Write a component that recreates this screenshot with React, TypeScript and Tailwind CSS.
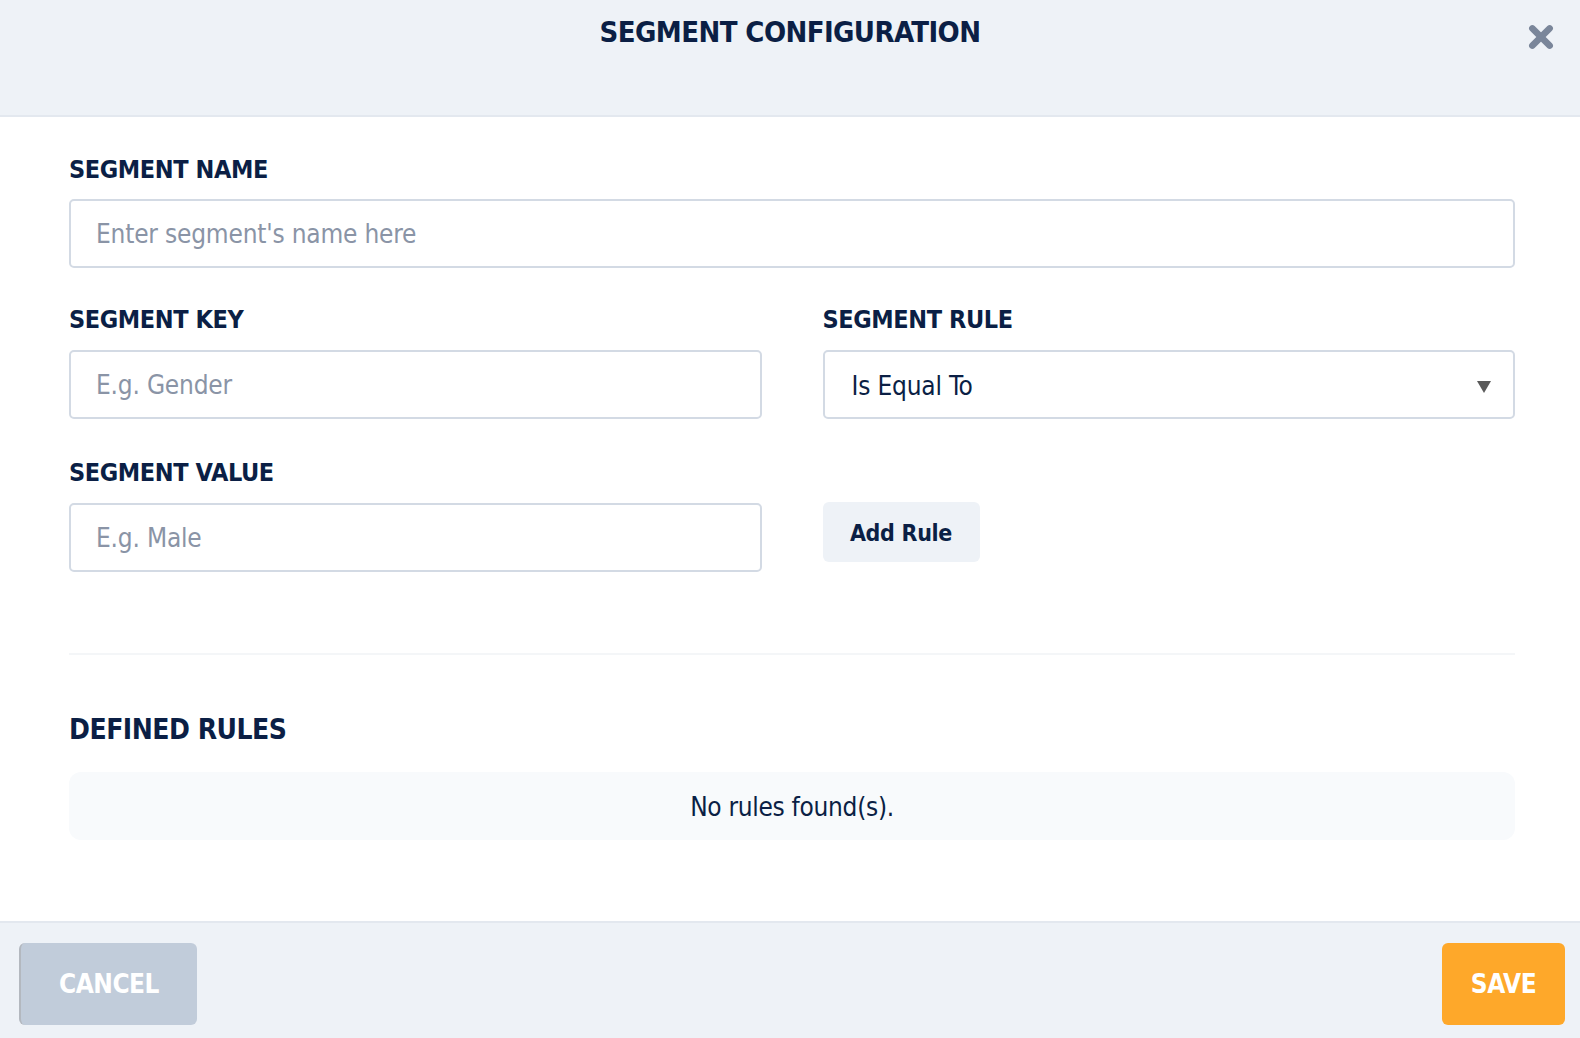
import React from "react";

const font = { fontFamily: '"DejaVu Sans Condensed", "Liberation Sans", sans-serif' };

export default function App() {
  return (
    <div className="w-[1580px] h-[1038px] flex flex-col bg-white text-[#0b1f45]" style={font}>
      <div className="h-[117px] shrink-0 bg-[#eef2f7] border-b-2 border-[#e3e8ef] flex items-start justify-center relative">
        <h1 className="mt-[11px] text-[29px] font-bold tracking-[-0.6px] text-[#0b1f45]">SEGMENT CONFIGURATION</h1>
        <button className="absolute right-[26px] top-[24px] w-[26px] h-[26px] flex items-center justify-center">
          <svg viewBox="0 0 24 24" width="26" height="26">
            <path d="M4 4 L20 20 M20 4 L4 20" stroke="#7a869a" strokeWidth="6" strokeLinecap="round" />
          </svg>
        </button>
      </div>

      <div className="flex-1 pl-[69px] pr-[65px] pt-[37px]">
        <div className="text-[25px] font-bold leading-[32px] tracking-[-0.4px]">SEGMENT NAME</div>
        <input
          className="mt-[13px] w-full h-[69px] border-2 border-[#d3dae4] rounded-[5px] px-[25px] text-[26px] tracking-[-0.2px] placeholder:text-[#8a94a6] outline-none"
          style={font}
          placeholder="Enter segment's name here"
        />

        <div className="grid grid-cols-2 gap-x-[61px] mt-[36px]">
          <div>
            <div className="text-[25px] font-bold leading-[32px] tracking-[-0.4px]">SEGMENT KEY</div>
            <input
              className="mt-[14px] w-full h-[69px] border-2 border-[#d3dae4] rounded-[5px] px-[25px] text-[26px] tracking-[-0.2px] placeholder:text-[#8a94a6] outline-none"
              style={font}
              placeholder="E.g. Gender"
            />
          </div>
          <div>
            <div className="text-[25px] font-bold leading-[32px] tracking-[-0.4px]">SEGMENT RULE</div>
            <div className="mt-[14px] w-full h-[69px] border-2 border-[#d3dae4] rounded-[5px] pl-[27px] pr-[22px] flex items-center justify-between">
              <span className="text-[26px] tracking-[-0.2px] text-[#0b1f45] mt-[4px]">Is Equal To</span>
              <svg width="14" height="12" viewBox="0 0 14 12" className="mt-[4px]"><path d="M0 0 H14 L7 12 Z" fill="#5a5a5a" /></svg>
            </div>
          </div>
          <div className="mt-[38px]">
            <div className="text-[25px] font-bold leading-[32px] tracking-[-0.4px]">SEGMENT VALUE</div>
            <input
              className="mt-[14px] w-full h-[69px] border-2 border-[#d3dae4] rounded-[5px] px-[25px] text-[26px] tracking-[-0.2px] placeholder:text-[#8a94a6] outline-none"
              style={font}
              placeholder="E.g. Male"
            />
          </div>
          <div className="mt-[38px] pt-[45px]">
            <button className="w-[157px] h-[60px] bg-[#eef2f7] rounded-[6px] text-[23px] font-bold tracking-[-0.3px] text-[#0b1f45] pt-[2px]" style={font}>
              Add Rule
            </button>
          </div>
        </div>

        <div className="mt-[81px] h-[2px] bg-[#f4f6f8]" />

        <div className="mt-[57px] text-[28px] font-bold leading-[36px] tracking-[-0.5px]">DEFINED RULES</div>
        <div className="mt-[24px] h-[68px] bg-[#f8fafc] rounded-[12px] flex items-center justify-center text-[26px] tracking-[-0.3px] pt-[2px]">
          No rules found(s).
        </div>
      </div>

      <div className="h-[117px] shrink-0 bg-[#eef2f7] border-t-2 border-[#e3e8ef] flex items-start justify-between pl-[19px] pr-[15px] pt-[20px]">
        <button className="w-[178px] h-[82px] bg-[#c1ccda] rounded-[6px] border-l-2 border-[#b3b8bf] text-white text-[26px] font-bold tracking-[-0.5px]" style={font}>
          CANCEL
        </button>
        <button className="w-[123px] h-[82px] bg-[#fea82a] rounded-[6px] text-white text-[26px] font-bold tracking-[-0.5px]" style={font}>
          SAVE
        </button>
      </div>
    </div>
  );
}
